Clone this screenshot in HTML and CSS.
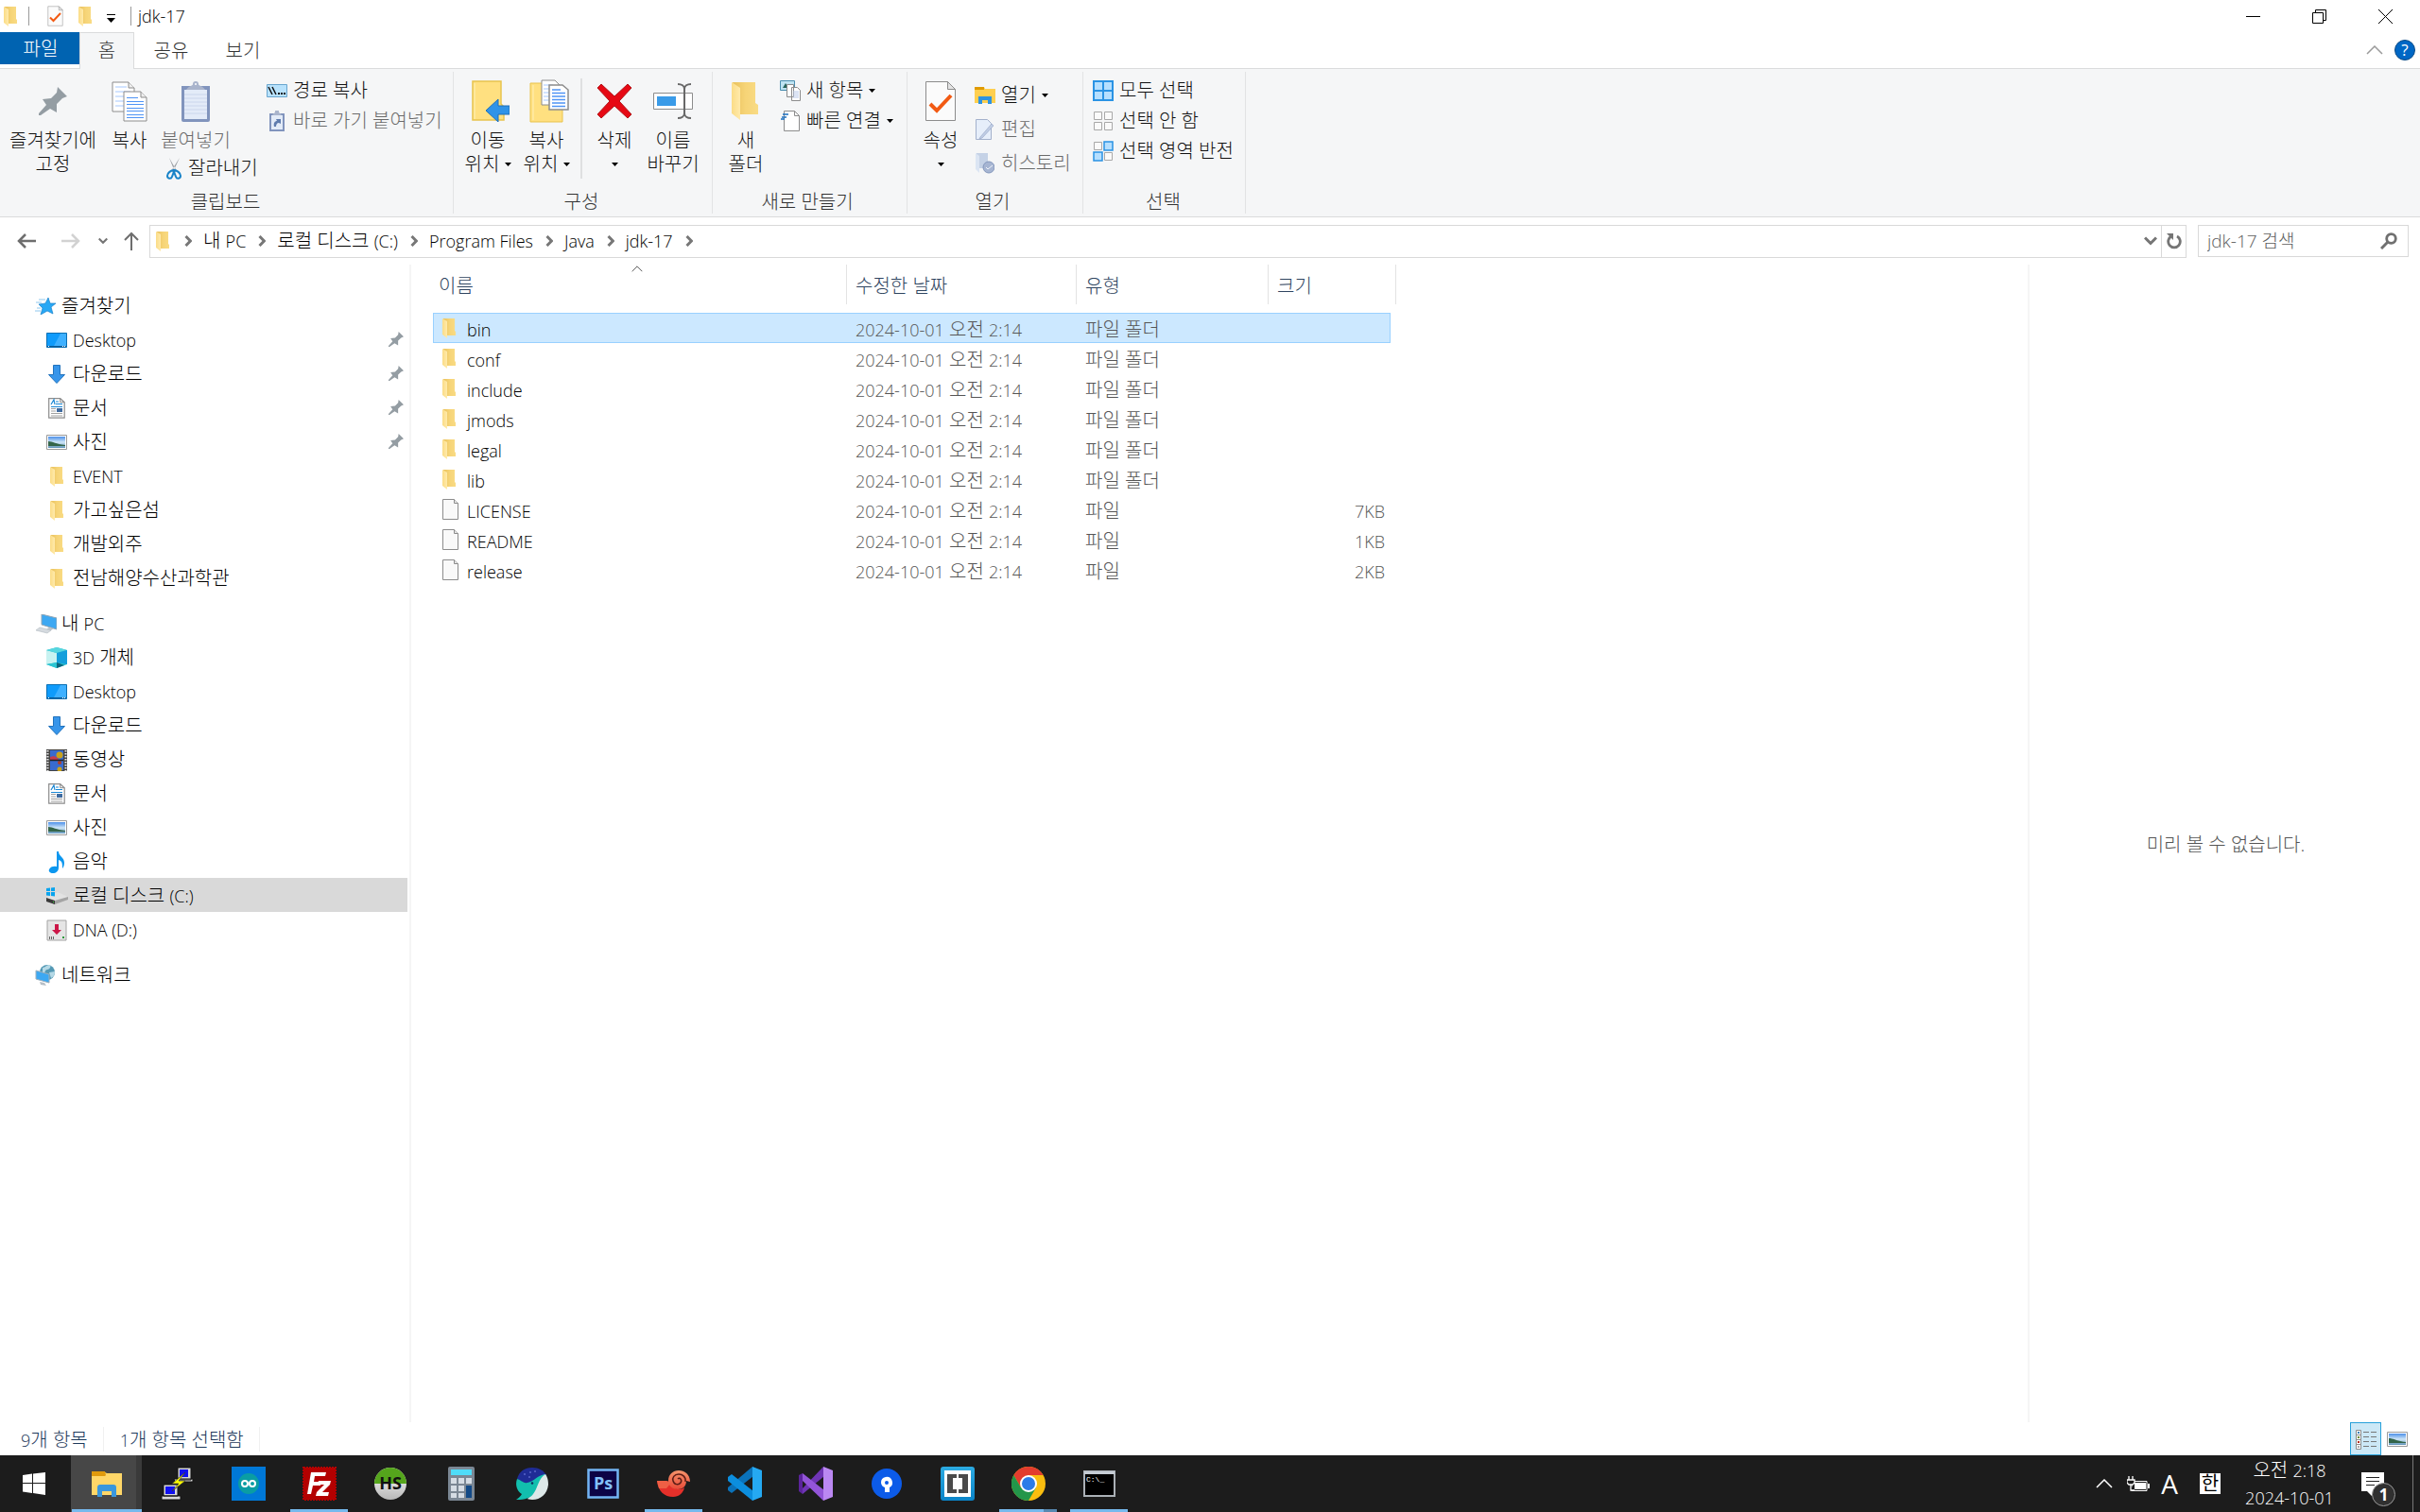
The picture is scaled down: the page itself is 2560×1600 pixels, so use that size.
FILE: index.html
```html
<!DOCTYPE html>
<html lang="ko">
<head>
<meta charset="utf-8">
<title>jdk-17</title>
<link rel="stylesheet" href="styles.css">
</head>
<body>
<svg class="sprite" aria-hidden="true">
  <defs>
    <linearGradient id="gFold" x1="0" x2="1"><stop offset="0" stop-color="#e9c15c"/><stop offset=".5" stop-color="#f6d477"/><stop offset="1" stop-color="#f9db84"/></linearGradient>
    <linearGradient id="gFlap" x1="0" x2="1"><stop offset="0" stop-color="#fbdc86"/><stop offset="1" stop-color="#ffeaab"/></linearGradient>
    <linearGradient id="gSky" x1="0" x2="0" y1="0" y2="1"><stop offset="0" stop-color="#4d90e8"/><stop offset=".5" stop-color="#cfe6f7"/><stop offset="1" stop-color="#5f93b8"/></linearGradient>
    <linearGradient id="gRed" x1="0" x2="0" y1="0" y2="1"><stop offset="0" stop-color="#f5946b"/><stop offset="1" stop-color="#e94a38"/></linearGradient>
    <linearGradient id="gBr" x1="0" x2="0" y1="0" y2="1"><stop offset="0" stop-color="#2cabe2"/><stop offset="1" stop-color="#0a84c8"/></linearGradient>
    <linearGradient id="gEgg" x1="0" x2="0" y1="0" y2="1"><stop offset="0" stop-color="#fff"/><stop offset="1" stop-color="#b8b8b8"/></linearGradient>
  </defs>
  <symbol id="folder" viewBox="0 0 14 21"><path d="M1 0h12v13l1 1v4H4z" fill="url(#gFold)"/><path d="M0 0l5 3v18L0 17z" fill="url(#gFlap)"/></symbol>
  <symbol id="bigfolder" viewBox="0 0 30 42"><path d="M1 1h24v22l3 2v10H8z" fill="url(#gFold)"/><path d="M0 1l9 6v34L0 34z" fill="url(#gFlap)"/></symbol>
  <symbol id="file" viewBox="0 0 17 22"><path d="M.5.5h12l4 4v17H.5z" fill="#f9f9f9" stroke="#8c8c8c"/><path d="M12.500.5v4h4" fill="#e8e8e8" stroke="#8c8c8c"/></symbol>
  <symbol id="props" viewBox="0 0 34 44"><path d="M1.500 1.500h23l8 8v33h-31z" fill="#fbfbfb" stroke="#8c8c8c"/><path d="M24.500 1.500v8h8z" fill="#e4e4e4" stroke="#8c8c8c"/><path d="M6 25l7 7 15-16" fill="none" stroke="#f25a13" stroke-width="4"/></symbol>
  <symbol id="pin" viewBox="0 0 30 30"><path d="M20 0l10 10-5 2-6 6 0 9-7-4-10 7-2 0 0-2 8-9-4-6 9-1 6-6z" fill="#949da3"/></symbol>
  <symbol id="copy" viewBox="0 0 38 43"><path d="M1 1h17l6 6v25H1z" fill="#fff" stroke="#8c8c8c"/><path d="M18 1v6h6" fill="#eee" stroke="#8c8c8c"/><path d="M4 6h12M4 11h16M4 16h12M4 21h10M4 26h10" stroke="#a5c8ff"/><path d="M13 11h18l6 6v25H13z" fill="#fff" stroke="#8c8c8c"/><path d="M31 11v6h6" fill="#eee" stroke="#8c8c8c"/><path d="M16 17.500h12M16 21.500h18M16 24.500h18M16 28.500h18M16 31.500h18M16 35.500h18M16 38.500h18" stroke="#4f94f5"/></symbol>
  <symbol id="paste" viewBox="0 0 30 43"><path d="M0 5h30v36a2 2 0 0 1-2 2H2a2 2 0 0 1-2-2z" fill="#8194bd"/><path d="M3 9h24v31H3z" fill="#e3ebf8"/><path d="M3 14h24M3 18h24M3 22h24M3 26h24M3 30h24M3 34h24" stroke="#cbd6ec"/><path d="M5 9c2-4 7-4 7-6a3 3 0 0 1 6 0c0 2 5 2 7 6z" fill="#a9b4cc"/><circle cx="15" cy="3" r="1" fill="#fff"/></symbol>
  <symbol id="cut" viewBox="0 0 16 23"><path d="M3 0l8 14-2 1zM14 0L5 14l2 1z" fill="#9c9fa5"/><g fill="none" stroke="#1883c8" stroke-width="2"><path d="M8 13c-3 0-7 3-7 6s4 4 5 1 2-4 2-7c3 0 7 3 7 6s-4 4-5 1-2-4-2-7"/></g></symbol>
  <symbol id="path" viewBox="0 0 22 14"><path d="M.5.5h21v13H.5z" fill="#b8e2fc" stroke="#69a5ce"/><path d="M2 3l4 8M6 3l4 8" stroke="#111" stroke-width="1.500"/><path d="M12 9h2v2h-2zM15 9h2v2h-2zM18 9h2v2h-2z" fill="#111"/></symbol>
  <symbol id="pshort" viewBox="0 0 16 22"><path d="M0 3h16v19H0z" fill="#8194bd"/><path d="M2 5h12v15H2z" fill="#e3ebf8"/><path d="M3 5c1-2 3-2 3-4a2 2 0 0 1 4 0c0 2 2 2 3 4z" fill="#a9b4cc"/><path d="M5 17c-1-4 1-6 3-6l-1-2h5v5l-2-1c-2 0-3 2-3 4z" fill="#5f7cae"/></symbol>
  <symbol id="moveto" viewBox="0 0 40 44"><path d="M1 1h30v24l3 3v14H1z" fill="#ffe080" stroke="#e8c34d" stroke-width="1.500"/><path d="M3 3v38" stroke="#fff0b8"/><path d="M15 32l13-12v7h12v9H28v8z" fill="#2f93e8" stroke="#1f6fb8"/></symbol>
  <symbol id="copyto" viewBox="0 0 42 46"><path d="M1 4h24v24h10v17H1z" fill="#ffe080" stroke="#e8c34d"/><path d="M4 6v37" stroke="#fff0b8"/><path d="M13 1h14l5 5v21H13z" fill="#fff" stroke="#8c8c8c"/><path d="M15 6h10M15 10h6M15 14h6M15 18h6M15 22h6" stroke="#a5c8ff"/><path d="M21 6h14l6 5v21H21z" fill="#fff" stroke="#8c8c8c" stroke-width="1.500"/><path d="M24 11h9M24 14.500h14M24 18h14M24 21.500h14M24 25h14M24 28.500h14" stroke="#4f94f5" stroke-width="1.300"/></symbol>
  <symbol id="delete" viewBox="0 0 38 38"><path d="M5 1l14 13L33 1l4 4-13 14 13 14-4 4-14-13L5 37l-4-4 13-14L1 5z" fill="#e60914" stroke="#b0151a"/></symbol>
  <symbol id="rename" viewBox="0 0 42 38"><path d="M.5 10.500h41v17H.5z" fill="#fff" stroke="#8c8c8c"/><path d="M4 14h20v10H4z" fill="#3a9be8"/><path d="M26 1c4 0 7 2 7 5v26c0 3-3 5-7 5M40 1c-4 0-7 2-7 5v26c0 3 3 5 7 5" fill="none" stroke="#686868" stroke-width="2"/></symbol>
  <symbol id="newitem" viewBox="0 0 22 22"><path d="M.5.500h15v10H.5z" fill="#bfe3f2" stroke="#4a8eb0"/><path d="M3 8l3-5 3 5z" fill="#28655d"/><path d="M7.500 4.500h7v13h-7zM12.500 7.500h6l3 3v11h-9z" fill="#fff" stroke="#8c8c8c"/><path d="M14 12h6M14 14h6M14 16h6M14 18h6" stroke="#b8c8e8"/></symbol>
  <symbol id="quick" viewBox="0 0 20 22"><path d="M3.500.500h11l5 5v16h-16z" fill="#fff" stroke="#8c8c8c"/><path d="M14.500.500v5h5" fill="none" stroke="#8c8c8c"/><path d="M2 4h6M1 7h5M0 9h4" stroke="#1b6fc0" stroke-width="1.500"/></symbol>
  <symbol id="open" viewBox="0 0 22 20"><path d="M0 1h10l1 2h11v15H0z" fill="#ffcf4f"/><path d="M0 1h10v3H0z" fill="#e09a00"/><path d="M4 11h14v8h-4v-4H8v4H4z" fill="#2f93e0"/></symbol>
  <symbol id="edit" viewBox="0 0 20 22"><path d="M.5.500h12l4 4v17H.5z" fill="#e6eefa" stroke="#a3b1cc"/><path d="M5 19l12-14 2 2L7 20l-3 1z" fill="#c0cde4" stroke="#93a3c4" stroke-width=".6"/></symbol>
  <symbol id="history" viewBox="0 0 20 22"><path d="M1 0h12v16H1z" fill="#c5d2e6"/><path d="M0 0l4 3v18l-4-4z" fill="#dbe5f3"/><circle cx="14" cy="15" r="6" fill="#a6b5d2" stroke="#8497bc"/><path d="M11 15l2 2 5-4" fill="none" stroke="#f0f4fa"/></symbol>
  <symbol id="selall" viewBox="0 0 22 22"><path d="M1 1h20v20H1zM11 1v20M1 11h20" fill="#b5dfff" stroke="#2a93e4" stroke-width="2"/></symbol>
  <symbol id="selnone" viewBox="0 0 22 22"><path d="M1.500 1.500h8v8h-8zM12.500 1.500h8v8h-8zM1.500 12.500h8v8h-8zM12.500 12.500h8v8h-8z" fill="#fafafa" stroke="#a8a8a8"/></symbol>
  <symbol id="selinv" viewBox="0 0 22 22"><path d="M1.500 1.500h8v8h-8zM12.500 12.500h8v8h-8z" fill="#fafafa" stroke="#a8a8a8"/><path d="M12 1h9v9h-9zM1 12h9v9H1z" fill="#b5dfff" stroke="#2a93e4" stroke-width="1.500"/></symbol>
  <symbol id="star" viewBox="0 0 22 18"><path d="M14 0l2 6 6 0-5 4 2 7-6-3-7 4 2-7-4-4 7-1z" fill="#28a8f5" stroke="#1b83cc" stroke-width=".7"/><path d="M4 2h7M1 5h6M2 11h4M0 14h6" stroke="#8fc8ee"/></symbol>
  <symbol id="desktop" viewBox="0 0 22 16"><path d="M.5.500h21v15H.5z" fill="#0f9bfb" stroke="#0b6fb3"/><path d="M8 14L15 1h6v13z" fill="#3eb0ff"/><path d="M1 14.500h20" stroke="#0b5a94"/><path d="M2 14h1v1H2zM17 14h1v1h-1zM19 14h1v1h-1z" fill="#fff"/></symbol>
  <symbol id="down" viewBox="0 0 20 20"><path d="M6.500.500h7v10h5L10 19.500 1.500 10.500h5z" fill="#3795ea" stroke="#2273bd"/></symbol>
  <symbol id="doc" viewBox="0 0 18 22"><path d="M.7.700h12l4.500 4v16.500H.7z" fill="#fff" stroke="#8c8c8c" stroke-width="1.200"/><path d="M12.700.700v4h4.500" fill="none" stroke="#8c8c8c"/><path d="M3 7l3-5 1 5M8 4h3M8 6.500h7M3 9.500h12" fill="none" stroke="#1b87d4" stroke-width="1.200"/><path d="M3 11.500h5M3 14h5M3 16.500h12M3 19h12" stroke="#a0a0a0"/><path d="M9 11h6v4H9z" fill="#3f6ba0"/></symbol>
  <symbol id="pic" viewBox="0 0 22 16"><path d="M.5.500h21v15H.5z" fill="#fff" stroke="#9a9a9a"/><path d="M2 2h18v12H2z" fill="url(#gSky)"/><path d="M2 7c5 0 8 3 18 4v1H2z" fill="#34654a"/></symbol>
  <symbol id="pc" viewBox="0 0 23 21"><path d="M7 0l16 4v12L7 11z" fill="#3da8f2" stroke="#93a5b3"/><path d="M15 14l5 1-3 2-5-1z" fill="#b9c2c9"/><path d="M5 14l12 3-4 3-12-3z" fill="#d5dadf" stroke="#b0b8c0" stroke-width=".6"/></symbol>
  <symbol id="cube" viewBox="0 0 22 22"><path d="M11 0l11 3v15l-11 4L0 18V3z" fill="#2bbecb"/><path d="M0 3l11 3v10L0 18z" fill="#c8f2f1"/><path d="M0 3l11-3 11 3-11 3z" fill="#56d6df"/><path d="M11 6l11-3v15l-11-2z" fill="#149fdc"/><path d="M0 18l11-2v6z" fill="#2cc5d2"/><path d="M11 16l8 3-8 3z" fill="#0b667e"/></symbol>
  <symbol id="video" viewBox="0 0 22 23"><path d="M0 0h22v23H0z" fill="#444"/><path d="M1.500 1v22M20.500 1v22" stroke="#eee" stroke-width="2" stroke-dasharray="1.500 1.500"/><path d="M4 1h14v10H4zM4 12h14v10H4z" fill="#386bd0"/><circle cx="14" cy="6" r="3.500" fill="#c9a21c"/><path d="M4 8l4-1 4 2 1 2H4z" fill="#c43e50"/><circle cx="14" cy="14" r="2" fill="#b03c28"/><circle cx="14" cy="21" r="2.500" fill="#c9a21c"/><path d="M4 11.500h14" stroke="#222" stroke-width="1.500"/></symbol>
  <symbol id="music" viewBox="0 0 18 23"><path d="M9 0h2c0 5 6 6 6 12 0 3-1 5-2 6 0-5 0-8-4-9v8c0 4-3 6-6 6s-5-2-4-4c1-3 5-4 8-3z" fill="#0c97ef"/></symbol>
  <symbol id="cdrive" viewBox="0 0 23 18"><path d="M0 11l12-6 11 5-14 7z" fill="#e2e2e2"/><path d="M0 11l9 3v4l-9-3z" fill="#3a3a3a"/><path d="M9 14l14-4v3L9 18z" fill="#a4a4a4"/><path d="M0 1l4-.5V4H0zM5 .4L9 0v4H5zM0 5h4v4L0 8.500zM5 5h4v4.500L5 9z" fill="#08a4ee"/><path d="M7 15h1v1H7z" fill="#3be03b"/></symbol>
  <symbol id="ddrive" viewBox="0 0 22 23"><path d="M1 1h20v21H1z" fill="#e5e5e5" stroke="#a3a3a3"/><path d="M9 5h4v6h3l-5 5-5-5h3z" fill="#cc1748"/><path d="M3.500 18v3M5.500 18v3M7.500 18v3" stroke="#666"/><path d="M17 18h2v2h-2z" fill="#2c9a3c"/></symbol>
  <symbol id="network" viewBox="0 0 22 22"><circle cx="13" cy="8" r="8" fill="#5398b4"/><path d="M8 3c3 0 4-3 7-3s1 5-2 5-1 4-5 3zM15 8l6-1c0 4-2 6-4 7z" fill="#b5d9e6"/><path d="M1 6l14 4v9L1 15z" fill="#3da8f2" stroke="#9fb0bc"/><path d="M5 18l5 1 2 3-6-1z" fill="#b6bec6"/></symbol>
  <symbol id="chev" viewBox="0 0 8 12"><path d="M1.500 1l5 5-5 5" fill="none" stroke="#777" stroke-width="3"/></symbol>
  <symbol id="chevd" viewBox="0 0 14 10"><path d="M1 1.500l6 6 6-6" fill="none" stroke="#757575" stroke-width="3"/></symbol>
  <symbol id="caretup" viewBox="0 0 18 10"><path d="M1 9l8-8 8 8" fill="none" stroke="currentColor" stroke-width="1.500"/></symbol>
  <symbol id="arrow" viewBox="0 0 20 16"><path d="M9 1L2 8l7 7M2 8h18" fill="none" stroke="currentColor" stroke-width="2.500"/></symbol>
  <symbol id="tri" viewBox="0 0 7 4"><path d="M0 0h7L3.500 4z" fill="#000"/></symbol>
</svg>

<div class="window">
  <header class="titlebar">
    <svg class="i-folder"><use href="#folder"/></svg>
    <span class="bar bar-first"></span>
    <button class="plain" aria-label="속성"><svg width="17" height="22"><use href="#props"/></svg></button>
    <button class="plain qat-folder" aria-label="새 폴더"><svg class="i-folder"><use href="#folder"/></svg></button>
    <button class="plain qat-more" aria-label="빠른 실행 도구 모음 사용자 지정"><svg width="9" height="9"><path d="M0 .5h9" stroke="#000"/><path d="M0 4h9L4.500 9z"/></svg></button>
    <span class="bar"></span>
    <h1 class="en">jdk-17</h1>
    <div class="winbtns">
      <button class="plain" aria-label="최소화"><svg width="15" height="15"><path d="M0 7.500h15" stroke="#000"/></svg></button>
      <button class="plain" aria-label="이전 크기로 복원"><svg width="15" height="15"><path d="M.5 3.500h11v11H.5zM3.500 3.500v-3h11v11h-3" fill="none" stroke="#000"/></svg></button>
      <button class="plain" aria-label="닫기"><svg width="15" height="15"><path d="M0 0l15 15M15 0L0 15" stroke="#000"/></svg></button>
    </div>
  </header>

  <nav class="tabs">
    <button class="tab tab-file">파일</button>
    <button class="tab tab-active">홈</button>
    <button class="tab">공유</button>
    <button class="tab">보기</button>
    <div class="tabs-end">
      <button class="plain fold" aria-label="리본 최소화"><svg width="18" height="10"><use href="#caretup"/></svg></button>
      <button class="plain help" aria-label="도움말">?</button>
    </div>
  </nav>

  <section class="ribbon">
    <div class="group g-clip">
      <div class="tools">
        <button class="big w100"><span class="pic"><svg width="30" height="30"><use href="#pin"/></svg></span>즐겨찾기에<br>고정</button>
        <button class="big w62"><span class="pic"><svg width="38" height="43"><use href="#copy"/></svg></span>복사</button>
        <div class="pastecol">
          <button class="big w78 off"><span class="pic"><svg width="30" height="43"><use href="#paste"/></svg></span>붙여넣기</button>
          <button class="small cut"><svg width="16" height="23"><use href="#cut"/></svg>잘라내기</button>
        </div>
        <div class="stack">
          <button class="small"><span class="ic"><svg width="22" height="14"><use href="#path"/></svg></span>경로 복사</button>
          <button class="small off"><span class="ic"><svg width="16" height="22"><use href="#pshort"/></svg></span>바로 가기 붙여넣기</button>
        </div>
      </div>
      <div class="gname">클립보드</div>
    </div>
    <div class="group g-org">
      <div class="tools">
        <button class="big w62"><span class="pic pic-r"><svg width="40" height="44"><use href="#moveto"/></svg></span>이동<br>위치 <svg class="tri"><use href="#tri"/></svg></button>
        <button class="big w62"><span class="pic pic-r"><svg width="42" height="46"><use href="#copyto"/></svg></span>복사<br>위치 <svg class="tri"><use href="#tri"/></svg></button>
        <span class="vline"></span>
        <button class="big w64"><span class="pic"><svg width="38" height="38"><use href="#delete"/></svg></span>삭제<br><svg class="tri"><use href="#tri"/></svg></button>
        <button class="big w60"><span class="pic"><svg width="42" height="38"><use href="#rename"/></svg></span>이름<br>바꾸기</button>
      </div>
      <div class="gname">구성</div>
    </div>
    <div class="group g-new">
      <div class="tools">
        <button class="big w64"><span class="pic"><svg width="30" height="42"><use href="#bigfolder"/></svg></span>새<br>폴더</button>
        <div class="stack">
          <button class="small"><span class="ic"><svg width="22" height="22"><use href="#newitem"/></svg></span>새 항목 <svg class="tri"><use href="#tri"/></svg></button>
          <button class="small"><span class="ic"><svg width="20" height="22"><use href="#quick"/></svg></span>빠른 연결 <svg class="tri"><use href="#tri"/></svg></button>
        </div>
      </div>
      <div class="gname">새로 만들기</div>
    </div>
    <div class="group g-open">
      <div class="tools">
        <button class="big w64"><span class="pic"><svg width="34" height="44"><use href="#props"/></svg></span>속성<br><svg class="tri"><use href="#tri"/></svg></button>
        <div class="stack tall">
          <button class="small"><span class="ic"><svg width="22" height="20"><use href="#open"/></svg></span>열기 <svg class="tri"><use href="#tri"/></svg></button>
          <button class="small off"><span class="ic"><svg width="20" height="22"><use href="#edit"/></svg></span>편집</button>
          <button class="small off"><span class="ic"><svg width="20" height="22"><use href="#history"/></svg></span>히스토리</button>
        </div>
      </div>
      <div class="gname">열기</div>
    </div>
    <div class="group g-sel">
      <div class="tools">
        <div class="stack">
          <button class="small"><span class="ic"><svg width="22" height="22"><use href="#selall"/></svg></span>모두 선택</button>
          <button class="small"><span class="ic"><svg width="22" height="22"><use href="#selnone"/></svg></span>선택 안 함</button>
          <button class="small"><span class="ic"><svg width="22" height="22"><use href="#selinv"/></svg></span>선택 영역 반전</button>
        </div>
      </div>
      <div class="gname">선택</div>
    </div>
  </section>

  <div class="address">
    <button class="plain nb-back" aria-label="뒤로"><svg width="20" height="16"><use href="#arrow"/></svg></button>
    <button class="plain nb-fwd" aria-label="앞으로"><svg width="20" height="16"><use href="#arrow"/></svg></button>
    <button class="plain nb-recent" aria-label="최근 위치"><svg width="10" height="8"><use href="#chevd"/></svg></button>
    <button class="plain nb-up" aria-label="위로"><svg width="16" height="20"><path d="M1 9l7-7 7 7M8 2v18" fill="none" stroke="#6e6e6e" stroke-width="2"/></svg></button>
    <div class="crumbs">
      <svg class="i-folder"><use href="#folder"/></svg>
      <svg class="chev"><use href="#chev"/></svg><a href="#">내 <span class="en">PC</span></a>
      <svg class="chev"><use href="#chev"/></svg><a href="#">로컬 디스크 <span class="en">(C:)</span></a>
      <svg class="chev"><use href="#chev"/></svg><a href="#" class="en">Program Files</a>
      <svg class="chev"><use href="#chev"/></svg><a href="#" class="en">Java</a>
      <svg class="chev"><use href="#chev"/></svg><a href="#" class="en">jdk-17</a>
      <svg class="chev"><use href="#chev"/></svg>
      <button class="plain drop" aria-label="이전 위치"><svg width="14" height="10"><use href="#chevd"/></svg></button>
      <button class="plain refresh" aria-label="새로 고침"><svg width="16" height="17"><path d="M11 3a6.300 6.300 0 1 1-6 0" fill="none" stroke="#757575" stroke-width="2.800"/><path d="M0 0h7v7z" fill="#757575"/></svg></button>
    </div>
    <label class="search"><input type="text" placeholder="jdk-17 검색" aria-label="jdk-17 검색"><svg width="18" height="18"><circle cx="11.500" cy="6.500" r="4.800" fill="none" stroke="#707070" stroke-width="2.800"/><path d="M8 10l-7 7" stroke="#707070" stroke-width="3"/></svg></label>
  </div>

  <main class="body">
    <nav class="tree">
      <ul>
        <li><a href="#" class="top"><span class="ic"><svg width="22" height="18"><use href="#star"/></svg></span>즐겨찾기</a></li>
        <li><a href="#"><span class="ic"><svg width="22" height="16"><use href="#desktop"/></svg></span><span class="en">Desktop</span><svg class="pinned"><use href="#pin"/></svg></a></li>
        <li><a href="#"><span class="ic"><svg width="20" height="20"><use href="#down"/></svg></span>다운로드<svg class="pinned"><use href="#pin"/></svg></a></li>
        <li><a href="#"><span class="ic"><svg width="18" height="22"><use href="#doc"/></svg></span>문서<svg class="pinned"><use href="#pin"/></svg></a></li>
        <li><a href="#"><span class="ic"><svg width="22" height="16"><use href="#pic"/></svg></span>사진<svg class="pinned"><use href="#pin"/></svg></a></li>
        <li><a href="#"><span class="ic"><svg class="i-folder"><use href="#folder"/></svg></span><span class="en">EVENT</span></a></li>
        <li><a href="#"><span class="ic"><svg class="i-folder"><use href="#folder"/></svg></span>가고싶은섬</a></li>
        <li><a href="#"><span class="ic"><svg class="i-folder"><use href="#folder"/></svg></span>개발외주</a></li>
        <li><a href="#"><span class="ic"><svg class="i-folder"><use href="#folder"/></svg></span>전남해양수산과학관</a></li>
      </ul>
      <ul>
        <li><a href="#" class="top"><span class="ic"><svg width="23" height="21"><use href="#pc"/></svg></span><span>내 <span class="en">PC</span></span></a></li>
        <li><a href="#"><span class="ic"><svg width="22" height="22"><use href="#cube"/></svg></span><span><span class="en">3D</span> 개체</span></a></li>
        <li><a href="#"><span class="ic"><svg width="22" height="16"><use href="#desktop"/></svg></span><span class="en">Desktop</span></a></li>
        <li><a href="#"><span class="ic"><svg width="20" height="20"><use href="#down"/></svg></span>다운로드</a></li>
        <li><a href="#"><span class="ic"><svg width="22" height="23"><use href="#video"/></svg></span>동영상</a></li>
        <li><a href="#"><span class="ic"><svg width="18" height="22"><use href="#doc"/></svg></span>문서</a></li>
        <li><a href="#"><span class="ic"><svg width="22" height="16"><use href="#pic"/></svg></span>사진</a></li>
        <li><a href="#"><span class="ic"><svg width="18" height="23"><use href="#music"/></svg></span>음악</a></li>
        <li><a href="#" class="current"><span class="ic"><svg width="23" height="18"><use href="#cdrive"/></svg></span><span>로컬 디스크 <span class="en">(C:)</span></span></a></li>
        <li><a href="#"><span class="ic"><svg width="22" height="23"><use href="#ddrive"/></svg></span><span class="en">DNA (D:)</span></a></li>
      </ul>
      <ul>
        <li><a href="#" class="top"><span class="ic"><svg width="22" height="22"><use href="#network"/></svg></span>네트워크</a></li>
      </ul>
    </nav>

    <div class="files">
      <table>
        <colgroup><col class="c1"><col class="c2"><col class="c3"><col class="c4"><col class="c5"></colgroup>
        <thead><tr>
          <th><div>이름<svg class="sort" width="12" height="7"><use href="#caretup"/></svg></div></th>
          <th><div>수정한 날짜</div></th><th><div>유형</div></th><th colspan="2"><div>크기</div></th>
        </tr></thead>
        <tbody>
          <tr class="sel"><td><a href="#" class="en"><svg class="i-folder"><use href="#folder"/></svg>bin</a></td><td><span class="en">2024-10-01</span> 오전 <span class="en">2:14</span></td><td>파일 폴더</td><td></td></tr>
          <tr><td><a href="#" class="en"><svg class="i-folder"><use href="#folder"/></svg>conf</a></td><td><span class="en">2024-10-01</span> 오전 <span class="en">2:14</span></td><td>파일 폴더</td><td></td></tr>
          <tr><td><a href="#" class="en"><svg class="i-folder"><use href="#folder"/></svg>include</a></td><td><span class="en">2024-10-01</span> 오전 <span class="en">2:14</span></td><td>파일 폴더</td><td></td></tr>
          <tr><td><a href="#" class="en"><svg class="i-folder"><use href="#folder"/></svg>jmods</a></td><td><span class="en">2024-10-01</span> 오전 <span class="en">2:14</span></td><td>파일 폴더</td><td></td></tr>
          <tr><td><a href="#" class="en"><svg class="i-folder"><use href="#folder"/></svg>legal</a></td><td><span class="en">2024-10-01</span> 오전 <span class="en">2:14</span></td><td>파일 폴더</td><td></td></tr>
          <tr><td><a href="#" class="en"><svg class="i-folder"><use href="#folder"/></svg>lib</a></td><td><span class="en">2024-10-01</span> 오전 <span class="en">2:14</span></td><td>파일 폴더</td><td></td></tr>
          <tr><td><a href="#" class="en"><svg class="i-file"><use href="#file"/></svg>LICENSE</a></td><td><span class="en">2024-10-01</span> 오전 <span class="en">2:14</span></td><td>파일</td><td class="en">7KB</td></tr>
          <tr><td><a href="#" class="en"><svg class="i-file"><use href="#file"/></svg>README</a></td><td><span class="en">2024-10-01</span> 오전 <span class="en">2:14</span></td><td>파일</td><td class="en">1KB</td></tr>
          <tr><td><a href="#" class="en"><svg class="i-file"><use href="#file"/></svg>release</a></td><td><span class="en">2024-10-01</span> 오전 <span class="en">2:14</span></td><td>파일</td><td class="en">2KB</td></tr>
        </tbody>
      </table>
    </div>

    <aside class="preview">미리 볼 수 없습니다.</aside>
  </main>

  <footer class="status">
    <span class="cell"><span class="en">9</span>개 항목</span>
    <span class="cell"><span class="en">1</span>개 항목 선택함</span>
    <button class="plain view-d" aria-label="자세히"><svg width="22" height="22"><g fill="#fff" stroke="#8c8c8c"><path d="M.5 1.500h5v5h-5zM.5 6.500h5v5h-5zM.5 11.500h5v5h-5zM.5 16.500h5v5h-5z"/></g><path d="M2 3h2v2H2z" fill="#357fb5"/><path d="M2 8h2v2H2z" fill="#6d8d2a"/><path d="M2 13h2v2H2z" fill="#b52a1e"/><path d="M2 18h2v2H2z" fill="#aaa"/><path d="M8 3.500h6M16 3.500h6M8 8.500h6M16 8.500h6M8 13.500h6M16 13.500h6M8 18.500h6M16 18.500h6" stroke="#777"/></svg></button>
    <button class="plain view-t" aria-label="큰 아이콘"><svg width="22" height="16"><use href="#pic"/></svg></button>
  </footer>
</div>

<div class="taskbar">
  <button class="task task-start" aria-label="시작"><svg width="24" height="24"><path d="M0 3l10-1.500V11H0zM11 1.400L24 0v11H11zM0 12h10v10L0 20.500zM11 12h13v12l-13-2z" fill="#fff"/></svg></button>
  <button class="task active run" aria-label="파일 탐색기"><svg width="32" height="27"><path d="M0 1h14l2 1h16v23H0z" fill="#ffd768"/><path d="M0 0h14l1 4-1 1H0z" fill="#e09a0c"/><path d="M6 17q0-3 3-3h14q3 0 3 3v10h-5v-6H11v6H6z" fill="#3a97dd"/></svg></button>
  <button class="task" aria-label="PuTTY"><svg width="34" height="36"><g stroke="#111" fill="#d8d8d8"><path d="M17 1h14v13H17zM13 13h20v3H14zM2 19h15v12H2zM0 31h20v4H0z"/></g><path d="M19 3h9v8h-9zM4 21h10v8H4z" fill="#1010f0"/><path d="M25 6L11 18h7l-7 8 14-11h-7z" fill="#ff0" stroke="#333" stroke-width=".7"/></svg></button>
  <button class="task" aria-label="Arduino"><svg width="36" height="36"><path d="M0 0h36v36H0z" fill="#0078d7"/><circle cx="18" cy="18" r="11" fill="#0a9da3"/><g fill="none" stroke="#fff" stroke-width="2"><circle cx="14" cy="18" r="3"/><circle cx="22" cy="18" r="3"/></g></svg></button>
  <button class="task run" aria-label="FileZilla"><svg width="36" height="36"><path d="M1 1h34v34H1z" fill="#b40000" stroke="#b40000" stroke-width="2" stroke-dasharray="2 1"/><path d="M9 6h16l-1 4H13l-1 6h8l-1 4h-8l-2 9H5zM17 15h13l-1 4-8 8h7l-1 4H14l1-4 8-8h-7z" fill="#fff"/></svg></button>
  <button class="task hs" aria-label="HeidiSQL"><svg width="34" height="34"><circle cx="17" cy="17" r="17" fill="url(#gEgg)"/><path d="M0 17a17 17 0 0 1 34 0z" fill="#55a51c"/><text x="17" y="23" text-anchor="middle">HS</text></svg></button>
  <button class="task" aria-label="계산기"><svg width="28" height="36"><rect width="28" height="36" rx="2" fill="#7b8794"/><path d="M3 3h22v6H3z" fill="#4fdcf8"/><path d="M3 12h6v6H3zM11 12h6v6h-6zM19 12h6v6h-6zM3 20h6v6H3zM11 20h6v6h-6zM3 28h6v5H3zM11 28h6v5h-6z" fill="#d5dce4"/><path d="M19 20h6v13h-6z" fill="#134a87"/></svg></button>
  <button class="task" aria-label="Whale"><svg width="34" height="34"><path d="M1 12C3 4 9 0 17 0c7 0 12 3 15 8l-12 8H8z" fill="#1f2c96"/><path d="M31 7c3 4 3 9 3 11-1 10-8 16-17 16-3 0-5-1-5-1 7-6 6-14 12-21 2-3 4-4 7-5z" fill="#dde8e8"/><path d="M1 12c4 1 7 5 11 4 7-1 10-8 19-9-8 5-8 15-13 21-3 4-8 6-18 6 3-2 5-4 6-6C0 24-1 17 1 12z" fill="#12bfae"/><circle cx="17" cy="16.500" r="1.300" fill="#0c2e5c"/><g fill="#5a66c8"><circle cx="9" cy="7" r="1"/><circle cx="15" cy="5" r="1"/><circle cx="20" cy="4" r="1"/><circle cx="14" cy="10" r="1"/></g></svg></button>
  <button class="task ps" aria-label="Photoshop"><svg width="34" height="32"><path d="M1.500 1.500h31v29h-31z" fill="#0c0446" stroke="#73b5f5" stroke-width="2.500"/><text x="17" y="22" text-anchor="middle">Ps</text></svg></button>
  <button class="task run" aria-label="Nautilus"><svg width="35" height="30"><path d="M0 12h10l5 2c1 4 4 7 8 7 3 0 5-1 6-2-1 6-6 10-12 10C8 29 1 23 0 12z" fill="#e5302a"/><path d="M0 12h10l5 2-5 6-8 0z" fill="#ee5f45"/><path d="M12 12C12 5 17 1 23 1s12 4 12 12l-4-1c0 6-4 9-9 9-6 0-10-4-10-9z" fill="url(#gRed)"/><path d="M30 13c1-5-3-8-7-8-5 0-7 4-6 7 1 4 6 5 8 2s-1-6-3-4" fill="none" stroke="#5c1d16" stroke-width="1.500"/></svg></button>
  <button class="task" aria-label="Visual Studio Code"><svg width="36" height="36"><path d="M26 0L0 22v3l4 3L27 10z" fill="#0a72ba"/><path d="M0 11l4-3 23 18-1 10L0 15z" fill="#0c8ede"/><path d="M26 0l10 4v28l-10 4V0z" fill="#25a9f2"/></svg></button>
  <button class="task" aria-label="Visual Studio"><svg width="36" height="36"><path d="M0 9l4-2v22l-4-3z" fill="#5b249b"/><path d="M26 0L4 23v6L27 10z" fill="#6f35b5"/><path d="M4 7l23 18-1 11L4 15z" fill="#9355d8"/><path d="M26 0l10 4v28l-10 4V0z" fill="#bb88f2"/></svg></button>
  <button class="task" aria-label="Sourcetree"><svg width="32" height="32"><circle cx="16" cy="16" r="16" fill="#0c5be8"/><path d="M10 15a6 6 0 1 1 9 5v5h-5v-5a6 6 0 0 1-4-5z" fill="#fff"/><circle cx="16" cy="15" r="2" fill="#0c5be8"/></svg></button>
  <button class="task" aria-label="Brackets"><svg width="36" height="36"><rect width="36" height="36" rx="3" fill="url(#gBr)"/><path d="M4 4h28v28H4z" fill="#fff"/><path d="M7 8h10v4h-4v12h4v4H7zM29 8H19v4h4v12h-4v4h10z" fill="#4a4a4a"/></svg></button>
  <button class="task run multi" aria-label="Chrome"><svg width="36" height="36"><circle cx="18" cy="18" r="18" fill="#f9bd0f"/><path d="M2.400 9A18 18 0 0 1 33.600 9H18L10.200 22.500z" fill="#e23c2e"/><path d="M2.400 9A18 18 0 0 0 18 36l7.800-13.500H10.200z" fill="#23964a"/><circle cx="18" cy="18" r="9" fill="#fff"/><circle cx="18" cy="18" r="7" fill="#2c7be8"/></svg></button>
  <button class="task run cmd" aria-label="명령 프롬프트"><svg width="34" height="28"><path d="M1 1h32v26H1z" fill="#000" stroke="#aab0b6" stroke-width="2"/><path d="M1 1h32v3H1z" fill="#c5ccd4"/><text x="3" y="12">C:\_</text></svg></button>
  <div class="tray">
    <button class="plain t-up" aria-label="숨겨진 아이콘 표시"><svg width="18" height="10"><use href="#caretup"/></svg></button>
    <button class="plain t-bat" aria-label="배터리"><svg width="24" height="17"><path d="M5 5.500h16v10H5z" fill="none" stroke="#fff"/><path d="M8 7h12v7H8zM22 8h2v5h-2z" fill="#fff"/><path d="M2 0v4M6 0v4M0 4h8v3L6 9H2L0 7zM4 9v6h4" fill="#1c1c1c" stroke="#fff" stroke-width="1.300"/></svg></button>
    <button class="plain t-a" aria-label="영문 입력">A</button>
    <button class="plain t-han" aria-label="한글">한</button>
    <button class="plain clock"><span>오전 <span class="en">2:18</span></span><span class="en">2024-10-01</span></button>
    <button class="plain t-note" aria-label="알림"><svg width="24" height="25"><path d="M0 0h24v20h-9l-4 5-5-5H0z" fill="#fff"/><path d="M5 5.500h14M5 9.500h14M5 13.500h9" stroke="#222"/></svg><span class="badge">1</span></button>
    <span class="peek"></span>
  </div>
</div>
</body>
</html>
```
FILE: styles.css
```css
* { box-sizing: border-box; }
body {
  margin: 0;
  min-height: 100vh;
  display: flex;
  flex-direction: column;
  background: #fff;
  color: #000;
  font-family: "Open Sans", "Noto Sans CJK KR", sans-serif;
  font-size: 20px;
  font-weight: 300;
  line-height: 24px;
}
.sprite { position: absolute; width: 0; height: 0; }
svg { flex: none; display: block; }
button { font: inherit; color: inherit; background: none; border: 0; padding: 0; margin: 0; }
a { color: inherit; text-decoration: none; }
ul { list-style: none; margin: 0; padding: 0; }
.en { font-size: 18px; font-weight: 350; }
.i-folder { width: 14px; height: 21px; }
.i-file { width: 17px; height: 22px; }
.plain { display: flex; align-items: center; justify-content: center; }
.window { flex: 1; display: flex; flex-direction: column; }

/* title bar */
.titlebar { height: 34px; display: flex; align-items: center; padding-left: 4px; }
.titlebar h1 { margin: 0 0 0 7px; }
.bar { width: 1px; height: 20px; background: #9a9a9a; }
.bar-first { margin: 0 19px 0 12px; }
.qat-folder { margin-left: 16px; }
.qat-more { margin: 4px 16px 0; }
.winbtns { margin-left: auto; display: flex; padding-right: 2px; }
.winbtns button { width: 70px; height: 34px; }

/* tabs */
.tabs { height: 38px; display: flex; color: #333; }
.tab { width: 76px; border: 1px solid transparent; border-bottom: 0; padding-left: 2px; }
.tab-file { width: 84px; height: 34px; background: #0063b1; color: #fff; }
.tab-active { width: 58px; height: 39px; border-color: #dadbdc; background: #f5f6f7; z-index: 1; padding-left: 0; }
.tabs-end { margin-left: auto; display: flex; align-items: center; gap: 12px; padding-right: 5px; }
.fold { color: #9a9a9a; }
.help { width: 22px; height: 22px; border-radius: 50%; background: #0067c5; border: 1px solid #0b4a85; color: #fff; font-size: 17px; font-weight: 400; line-height: 20px; }

/* ribbon */
.ribbon { min-height: 158px; display: flex; background: #f5f6f7; border: solid #dadbdc; border-width: 1px 0; color: #111; }
.group { display: flex; flex-direction: column; margin: 3px 0; border-right: 1px solid #e2e3e4; }
.tools { display: flex; flex: 1; }
.gname { text-align: center; height: 25px; line-height: 26px; color: #333; }
.g-clip { width: 480px; padding-left: 6px; }
.g-org { width: 274px; padding-left: 5px; }
.g-new { width: 206px; padding-left: 3px; }
.g-open { width: 186px; padding-left: 3px; }
.g-sel { width: 172px; padding-left: 6px; }
.gname { margin-left: -8px; }
.big { display: block; padding-top: 6px; line-height: 25px; text-align: center; white-space: nowrap; align-self: flex-start; }
.pic { display: flex; height: 50px; margin-bottom: 4px; align-items: center; justify-content: center; }
.pic-r { padding-left: 6px; }
.w100 { width: 100px; }
.w60 { width: 60px; }
.w62 { width: 62px; }
.w64 { width: 64px; }
.w78 { width: 78px; }
.off { color: #6a6a6a; }
.tri { width: 7px; height: 4px; display: inline-block; vertical-align: middle; margin-bottom: 4px; }
.pastecol { width: 110px; display: flex; flex-direction: column; }
.small { height: 32px; display: flex; align-items: center; gap: 6px; white-space: nowrap; }
.small .tri { margin: 0; }
.cut { padding: 2px 0 0 8px; gap: 7px; }
.ic { width: 22px; display: flex; justify-content: center; flex: none; }
.stack { padding: 4px 0 0 4px; }
.tall { padding-top: 7px; }
.tall .small { height: 36px; }
.vline { width: 2px; height: 106px; margin: 7px 2px 0 5px; background: #dfe0e1; }

/* address bar */
.address { height: 50px; display: flex; align-items: center; padding: 0 12px 0 18px; }
.nb-back { color: #6e6e6e; }
.nb-fwd { color: #d2d2d2; margin-left: 27px; }
.nb-fwd svg { transform: scaleX(-1); }
.nb-recent { margin-left: 19px; }
.nb-up { margin: 0 11px 0 17px; }
.crumbs { flex: 1; height: 35px; border: 1px solid #d9d9d9; display: flex; align-items: center; padding-left: 6px; }
.crumbs .chev { width: 8px; height: 12px; margin: 0 12px 0 13px; }
.crumbs .i-folder { margin-right: 3px; }
.drop { margin-left: auto; width: 22px; }
.refresh { width: 26px; height: 33px; border-left: 1px solid #d9d9d9; }
.search { width: 223px; height: 34px; margin-left: 12px; border: 1px solid #d9d9d9; display: flex; align-items: center; padding: 0 11px 0 9px; }
.search input { flex: 1; min-width: 0; border: 0; outline: 0; padding: 0; font: inherit; font-size: 19px; background: none; }
.search input::placeholder { color: #5d5d5d; opacity: 1; }

/* main area */
.body { flex: 1; display: flex; }
.tree { width: 435px; border-right: 2px solid #f5f5f5; padding: 25px 2px 0 0; }
.tree ul { margin-bottom: 12px; }
.tree a { height: 36px; display: flex; align-items: center; gap: 6px; padding: 2px 0 0 49px; white-space: nowrap; }
.tree a.top { padding-left: 37px; }
.tree a.current { background: #d9d9d9; }
.pinned { width: 16px; height: 16px; margin: 0 4px 2px auto; }
.files { flex: 1; padding-left: 23px; }
table { table-layout: fixed; width: 1019px; border-spacing: 0; }
.c1 { width: 438px; }
.c2 { width: 243px; }
.c3 { width: 203px; }
.c4 { width: 129px; }
.c5 { width: 6px; }
th { padding: 0 0 9px; font-weight: 300; text-align: left; color: #2f4560; }
th div { position: relative; height: 42px; padding-left: 9px; line-height: 46px; border-right: 1px solid #e3e3e3; }
th:first-child div { padding-left: 6px; }
.sort { position: absolute; left: 50%; top: 1px; margin-left: -9px; color: #555; }
td { height: 32px; padding: 3px 0 0 9px; border: solid transparent; border-width: 1px 0; color: #555; white-space: nowrap; line-height: 24px; }
td:first-child { padding-top: 0; border-left-width: 1px; }
td:nth-child(4) { text-align: right; padding-right: 5px; border-right-width: 1px; }
td a { display: flex; align-items: center; gap: 12px; height: 30px; padding-top: 3px; color: #000; }
td a svg { margin-bottom: 3px; }
td a .i-file { margin-right: -3px; }
.sel td { background: #cce8ff; border-color: #99d1ff; }
.preview { width: 415px; border-left: 2px solid #f5f5f5; display: flex; align-items: center; justify-content: center; padding: 2px 0 0 2px; color: #555; }

/* status bar */
.status { height: 35px; display: flex; align-items: center; padding: 0 13px 0 22px; color: #1e395b; }
.cell { padding: 2px 16px 0 0; margin-right: 17px; border-right: 1px solid #f0f0f0; }
.view-d { width: 33px; height: 35px; margin-left: auto; background: #cce8f6; border: 1px solid #26a0da; }
.view-t { margin-left: 6px; }

/* taskbar */
.taskbar { height: 60px; display: flex; background: #1c1c1c; color: #fff; }
.task { width: 75px; display: flex; align-items: center; justify-content: center; position: relative; }
.task-start { padding-right: 3px; }
.active { background: #474747; box-shadow: inset -6px 0 #3a3a3a; }
.run::after { content: ""; position: absolute; left: 7px; right: 7px; bottom: 0; height: 3px; background: #76b9ed; }
.active::after { left: 1px; right: 0; }
.multi::after { background: linear-gradient(90deg, #76b9ed 47px, #5688b0 47px); }
.hs text { font-size: 18px; font-weight: 700; fill: #111; }
.ps text { font-size: 18px; font-weight: 700; fill: #83c1fa; }
.cmd text { font: 8px "Liberation Mono", monospace; fill: #fff; }
.tray { margin-left: auto; display: flex; align-items: center; height: 60px; }
.t-up { width: 18px; }
.t-bat { margin-left: 15px; }
.t-a { margin-left: 11px; width: 20px; font-size: 28px; font-weight: 400; }
.t-han { margin-left: 22px; width: 22px; height: 22px; background: #fff; color: #000; font-weight: 400; }
.clock { width: 104px; margin-left: 21px; flex-direction: column; line-height: 29px; }
.t-note { position: relative; margin-left: 24px; width: 36px; justify-content: flex-start; }
.badge { position: absolute; left: 11px; top: 11px; width: 25px; height: 25px; border: 1px solid #999; border-radius: 50%; background: #303030; font-size: 17px; font-weight: 700; line-height: 23px; }
.peek { width: 1px; height: 60px; margin: 0 7px 0 18px; background: #777; }
```
